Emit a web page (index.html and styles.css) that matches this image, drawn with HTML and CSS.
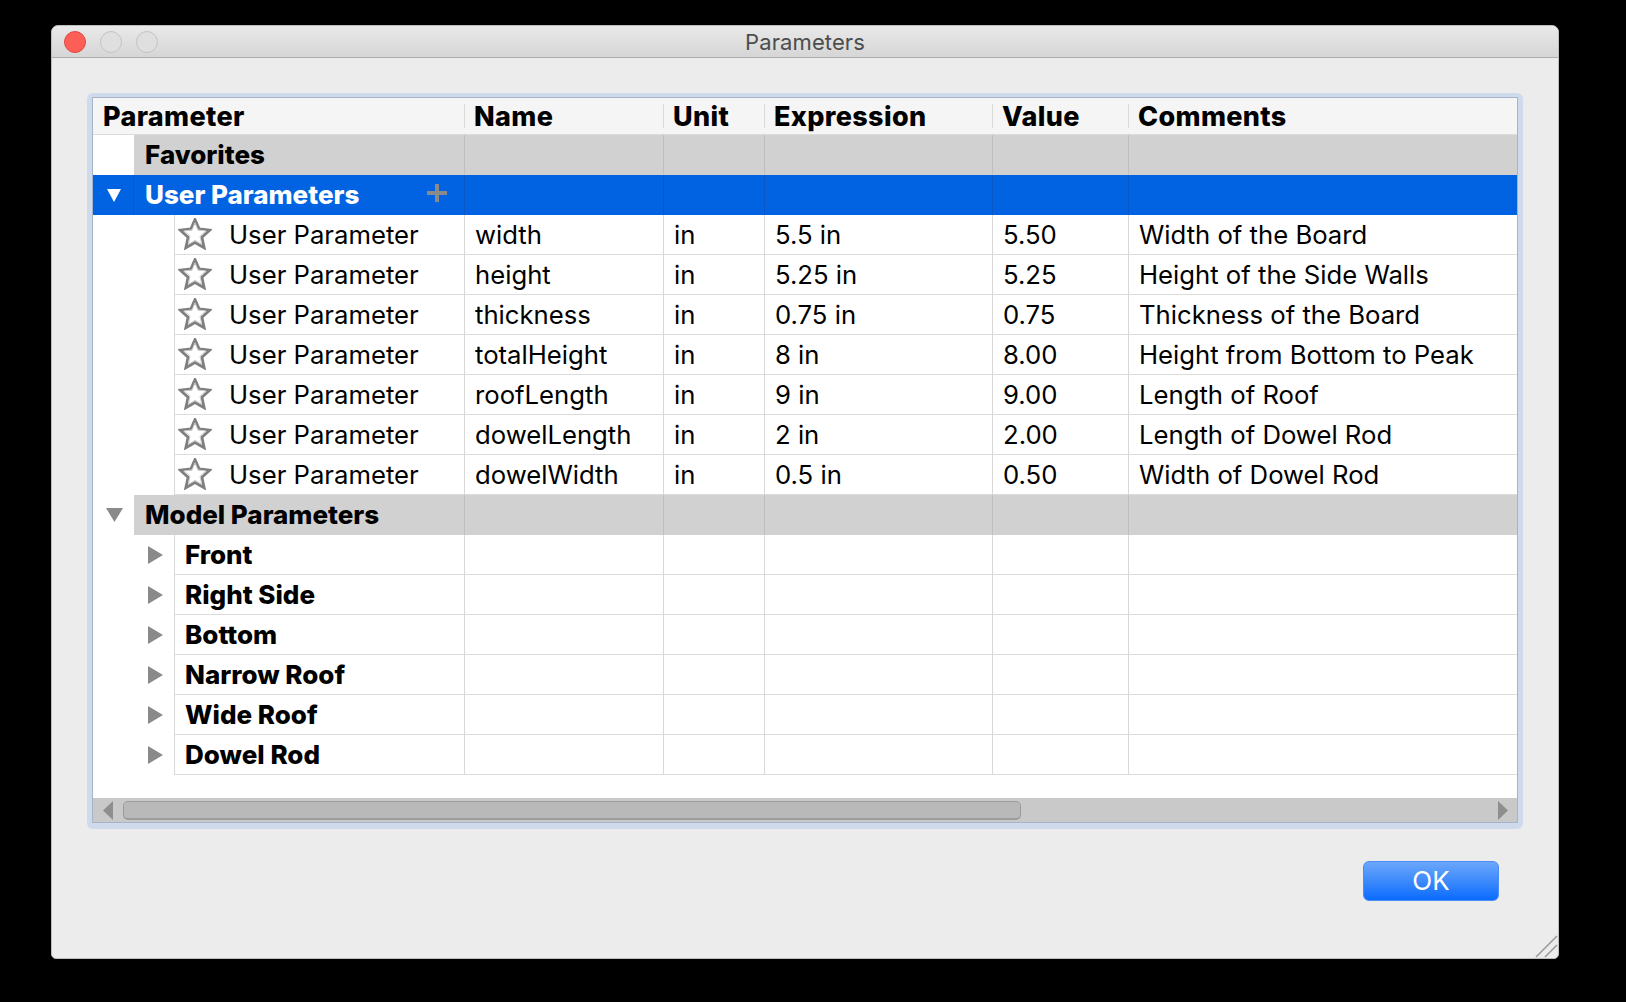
FILE: index.html
```html
<!DOCTYPE html>
<html>
<head>
<meta charset="utf-8">
<title>Parameters</title>
<link rel="stylesheet" href="styles.css">
</head>
<body>
<svg class="defs" width="0" height="0" aria-hidden="true">
  <defs>
    <symbol id="star" viewBox="0 0 34 32">
      <polygon points="17,1.6 21.2,11 31.8,12.2 23.9,19.3 26.2,29.8 17,24.5 7.8,29.8 10.1,19.3 2.2,12.2 12.8,11" fill="#fff" stroke="#7f7f7f" stroke-width="2.8" stroke-linejoin="miter"/>
      <polygon points="17,4.8 19.9,11.9 27.9,12.9 22,18.3 23.7,26.3 17,22.4 10.3,26.3 12,18.3 6.1,12.9 14.1,11.9" fill="none" stroke="#c9c9c9" stroke-width="1"/>
    </symbol>
    <symbol id="tri-right" viewBox="0 0 15 18">
      <polygon points="0,0 15,9 0,18" fill="#8a8a8a"/>
    </symbol>
  </defs>
</svg>

<div class="window">
  <div class="titlebar">
    <div class="lights">
      <span class="light close"></span>
      <span class="light"></span>
      <span class="light"></span>
    </div>
    <div class="title">Parameters</div>
    <div></div>
  </div>

  <div class="content">
    <div class="frame">
      <div class="table">
        <div class="row head">
          <div class="h first">Parameter</div>
          <div class="h">Name</div>
          <div class="h">Unit</div>
          <div class="h">Expression</div>
          <div class="h">Value</div>
          <div class="h">Comments</div>
        </div>

        <div class="row group">
          <div class="p"><div class="ind g"></div><div class="pc gc">Favorites</div></div>
          <div class="c"></div><div class="c"></div><div class="c"></div><div class="c"></div><div class="c"></div>
        </div>

        <div class="row group sel">
          <div class="p"><div class="ind g"><svg class="tri-down" width="14" height="13" viewBox="0 0 14 13"><polygon points="0,0 14,0 7,13" fill="#fff"/></svg></div><div class="pc gc"><span class="grow">User Parameters</span><svg class="plus" width="20" height="18" viewBox="0 0 20 18"><rect x="0" y="7" width="20" height="4" fill="#8a8a8a"/><rect x="8" y="0" width="4" height="18" fill="#8a8a8a"/></svg></div></div>
          <div class="c"></div><div class="c"></div><div class="c"></div><div class="c"></div><div class="c"></div>
        </div>

        <div class="row">
          <div class="p"><div class="ind"></div><div class="pc item"><svg class="star"><use href="#star"/></svg>User Parameter</div></div>
          <div class="c">width</div><div class="c">in</div><div class="c">5.5 in</div><div class="c">5.50</div><div class="c">Width of the Board</div>
        </div>
        <div class="row">
          <div class="p"><div class="ind"></div><div class="pc item"><svg class="star"><use href="#star"/></svg>User Parameter</div></div>
          <div class="c">height</div><div class="c">in</div><div class="c">5.25 in</div><div class="c">5.25</div><div class="c">Height of the Side Walls</div>
        </div>
        <div class="row">
          <div class="p"><div class="ind"></div><div class="pc item"><svg class="star"><use href="#star"/></svg>User Parameter</div></div>
          <div class="c">thickness</div><div class="c">in</div><div class="c">0.75 in</div><div class="c">0.75</div><div class="c">Thickness of the Board</div>
        </div>
        <div class="row">
          <div class="p"><div class="ind"></div><div class="pc item"><svg class="star"><use href="#star"/></svg>User Parameter</div></div>
          <div class="c">totalHeight</div><div class="c">in</div><div class="c">8 in</div><div class="c">8.00</div><div class="c">Height from Bottom to Peak</div>
        </div>
        <div class="row">
          <div class="p"><div class="ind"></div><div class="pc item"><svg class="star"><use href="#star"/></svg>User Parameter</div></div>
          <div class="c">roofLength</div><div class="c">in</div><div class="c">9 in</div><div class="c">9.00</div><div class="c">Length of Roof</div>
        </div>
        <div class="row">
          <div class="p"><div class="ind"></div><div class="pc item"><svg class="star"><use href="#star"/></svg>User Parameter</div></div>
          <div class="c">dowelLength</div><div class="c">in</div><div class="c">2 in</div><div class="c">2.00</div><div class="c">Length of Dowel Rod</div>
        </div>
        <div class="row">
          <div class="p"><div class="ind"></div><div class="pc item"><svg class="star"><use href="#star"/></svg>User Parameter</div></div>
          <div class="c">dowelWidth</div><div class="c">in</div><div class="c">0.5 in</div><div class="c">0.50</div><div class="c">Width of Dowel Rod</div>
        </div>

        <div class="row group">
          <div class="p"><div class="ind g"><svg class="tri-down" width="17" height="14" viewBox="0 0 17 14"><polygon points="0,0 17,0 8.5,14" fill="#8a8a8a"/></svg></div><div class="pc gc">Model Parameters</div></div>
          <div class="c"></div><div class="c"></div><div class="c"></div><div class="c"></div><div class="c"></div>
        </div>

        <div class="row child">
          <div class="p"><div class="ind"><svg class="tri-right"><use href="#tri-right"/></svg></div><div class="pc">Front</div></div>
          <div class="c"></div><div class="c"></div><div class="c"></div><div class="c"></div><div class="c"></div>
        </div>
        <div class="row child">
          <div class="p"><div class="ind"><svg class="tri-right"><use href="#tri-right"/></svg></div><div class="pc">Right Side</div></div>
          <div class="c"></div><div class="c"></div><div class="c"></div><div class="c"></div><div class="c"></div>
        </div>
        <div class="row child">
          <div class="p"><div class="ind"><svg class="tri-right"><use href="#tri-right"/></svg></div><div class="pc">Bottom</div></div>
          <div class="c"></div><div class="c"></div><div class="c"></div><div class="c"></div><div class="c"></div>
        </div>
        <div class="row child">
          <div class="p"><div class="ind"><svg class="tri-right"><use href="#tri-right"/></svg></div><div class="pc">Narrow Roof</div></div>
          <div class="c"></div><div class="c"></div><div class="c"></div><div class="c"></div><div class="c"></div>
        </div>
        <div class="row child">
          <div class="p"><div class="ind"><svg class="tri-right"><use href="#tri-right"/></svg></div><div class="pc">Wide Roof</div></div>
          <div class="c"></div><div class="c"></div><div class="c"></div><div class="c"></div><div class="c"></div>
        </div>
        <div class="row child">
          <div class="p"><div class="ind"><svg class="tri-right"><use href="#tri-right"/></svg></div><div class="pc">Dowel Rod</div></div>
          <div class="c"></div><div class="c"></div><div class="c"></div><div class="c"></div><div class="c"></div>
        </div>

        <div class="filler"></div>

        <div class="scrollbar">
          <svg class="arrow" width="10" height="19" viewBox="0 0 10 19"><polygon points="10,0 10,19 0,9.5" fill="#8e8e8e"/></svg>
          <div class="thumb"></div>
          <div class="grow"></div>
          <svg class="arrow" width="10" height="19" viewBox="0 0 10 19"><polygon points="0,0 10,9.5 0,19" fill="#8e8e8e"/></svg>
        </div>
      </div>
    </div>

    <div class="buttons">
      <button class="ok">OK</button>
    </div>
  </div>

  <svg class="grip" width="24" height="24" viewBox="0 0 24 24"><line x1="23" y1="2" x2="2" y2="23" stroke="#9a9a9a" stroke-width="1.6"/><line x1="23" y1="11" x2="11" y2="23" stroke="#9a9a9a" stroke-width="1.6"/></svg>
</div>
</body>
</html>
```

FILE: styles.css
```css
* {
  box-sizing: border-box;
  margin: 0;
  padding: 0;
}

html, body {
  background: #000;
}

body {
  padding: 25px 0 0 51px;
  font-family: Inter, "Noto Sans", "Liberation Sans", sans-serif;
  color: #000;
}

.defs {
  position: absolute;
  width: 0;
  height: 0;
}

.window {
  width: 1508px;
  height: 934px;
  background: #ececec;
  border: 1px solid #bdbdbd;
  border-radius: 7px 7px 5px 5px;
  display: flex;
  flex-direction: column;
  position: relative;
  overflow: hidden;
}

.titlebar {
  height: 32px;
  flex: none;
  display: grid;
  grid-template-columns: 1fr auto 1fr;
  align-items: center;
  background: linear-gradient(#e9e9e9, #d6d6d6);
  border-bottom: 1px solid #adadad;
}

.lights {
  display: flex;
  gap: 14px;
  padding-left: 12px;
}

.light {
  width: 22px;
  height: 22px;
  border-radius: 50%;
  border: 1px solid #c3c3c3;
  background: #dfdfdf;
}

.light.close {
  background: #fd5f57;
  border-color: #e2463f;
}

.title {
  font-size: 22px;
  color: #4d4d4d;
  letter-spacing: 0.1px;
  padding-top: 1px;
}

.content {
  flex: 1;
  display: flex;
  flex-direction: column;
  padding: 35px 35px 0 35px;
}

.frame {
  height: 736px;
  background: #cfdbec;
  border-radius: 6px;
  padding: 4px 5px 6px 5px;
}

.table {
  height: 100%;
  border: 1px solid #a7b4c8;
  background: #fff;
  display: flex;
  flex-direction: column;
}

.row {
  display: grid;
  grid-template-columns: 371px 199px 101px 228px 136px 389px;
  height: 40px;
  flex: none;
  font-size: 25.7px;
}

.head {
  height: 37px;
  background: #f5f5f5;
  border-bottom: 1px solid #dcdcdc;
  font-weight: 800;
  font-size: 27px;
  letter-spacing: 0.35px;
}

.h {
  display: flex;
  align-items: center;
  padding-left: 10px;
  background: linear-gradient(#dadada, #dadada) 0 6px / 1px calc(100% - 12px) no-repeat;
}

.h.first {
  background: none;
  padding-left: 10px;
}

.c {
  display: flex;
  align-items: center;
  padding-left: 10px;
  padding-bottom: 1px;
  border-left: 1px solid #d8d8d8;
  border-bottom: 1px solid #dcdcdc;
  white-space: nowrap;
  overflow: hidden;
}

.p {
  display: flex;
  white-space: nowrap;
}

.ind {
  width: 81px;
  flex: none;
  display: flex;
  align-items: center;
  justify-content: flex-end;
  padding-right: 11px;
}

.ind.g {
  width: 41px;
  justify-content: center;
  padding-right: 0;
  padding-left: 1px;
}

.pc {
  flex: 1;
  display: flex;
  align-items: center;
  border-left: 1px solid #d8d8d8;
  border-bottom: 1px solid #dcdcdc;
  padding-left: 10px;
  padding-bottom: 1px;
  font-weight: 800;
  font-size: 26px;
}

.pc.item {
  font-weight: 400;
  font-size: 25.7px;
  padding-left: 3px;
}

.pc.gc {
  border-left: none;
  padding-left: 11px;
}

.star {
  width: 34px;
  height: 32px;
  margin-right: 17px;
  flex: none;
}

.tri-right {
  width: 15px;
  height: 18px;
}

.grow {
  flex: 1;
}

.plus {
  margin-right: 17px;
  margin-top: -2px;
}

/* gray group rows */
.group .pc,
.group .c {
  background: #d1d1d1;
  border-bottom-color: #d1d1d1;
}

.group .c {
  border-left-color: #bfbfbf;
}

/* selected row */
.group.sel,
.group.sel .ind {
  background: #0163e1;
}

.group.sel .ind {
  border-right: 1px solid #0b58c4;
}

.group.sel .pc,
.group.sel .c {
  background: #0163e1;
  border-bottom-color: #0163e1;
  color: #fff;
}

.group.sel .c {
  border-left-color: #0b58c4;
}

.filler {
  flex: 1;
}

.scrollbar {
  height: 24px;
  flex: none;
  background: #c9c9c9;
  display: flex;
  align-items: center;
  padding: 0 9px 0 10px;
}

.arrow {
  flex: none;
}

.thumb {
  width: 898px;
  height: 19px;
  margin-left: 10px;
  background: #b9b9b9;
  border: 1px solid #9c9c9c;
  border-bottom-width: 2px;
  border-radius: 5px;
}

.buttons {
  display: flex;
  justify-content: flex-end;
  padding-top: 32px;
  padding-right: 24px;
}

.ok {
  width: 136px;
  height: 40px;
  border: 1px solid #4b8df6;
  border-radius: 6px;
  background: linear-gradient(#6ba7fb, #3d8afb 50%, #0a6bfe);
  color: #fff;
  font-family: Inter, "Noto Sans", sans-serif;
  font-size: 26px;
  line-height: 1;
}

.grip {
  position: absolute;
  right: 0;
  bottom: 0;
}
```
